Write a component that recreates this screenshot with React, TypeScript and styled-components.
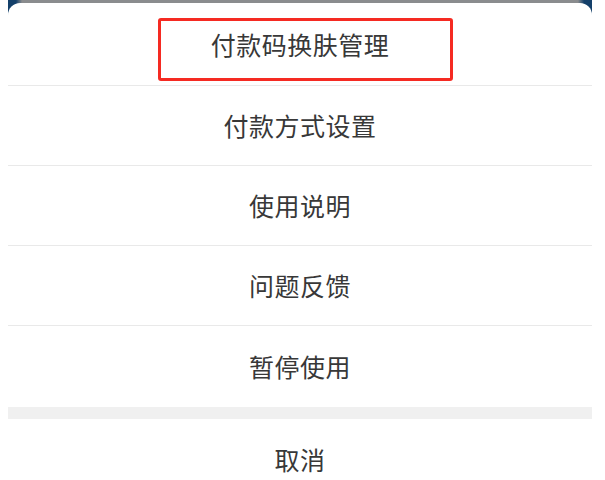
import styled, { createGlobalStyle } from "styled-components";

const GlobalStyle = createGlobalStyle`
  html, body {
    margin: 0;
    padding: 0;
    background: #ffffff;
  }
  body {
    font-family: "Noto Sans CJK SC", "Noto Sans", sans-serif;
  }
`;

const items = ["付款码换肤管理", "付款方式设置", "使用说明", "问题反馈", "暂停使用"];

export default function App() {
  return (
    <>
      <GlobalStyle />
      <Page>
        <Backdrop>
          <Sheet>
            {items.map((label, index) => (
              <Row key={label} $first={index === 0} $last={index === items.length - 1}>
                <Label>{label}</Label>
                {index === 0 && <Highlight />}
              </Row>
            ))}
            <Gap />
            <CancelRow>
              <Label>取消</Label>
            </CancelRow>
          </Sheet>
        </Backdrop>
      </Page>
    </>
  );
}

const Page = styled.div`
  width: 605px;
  height: 480px;
  overflow: hidden;
  padding: 0 13px 0 8px;
  box-sizing: border-box;
`;

const Backdrop = styled.div`
  background: linear-gradient(
    to right,
    #14406a 0,
    #14406a 8px,
    #8a8c8e 14px,
    #8a8c8e calc(100% - 14px),
    #14406a calc(100% - 8px),
    #14406a 100%
  );
  padding-top: 3px;
`;

const Sheet = styled.div`
  background: #ffffff;
  border-radius: 12px 12px 0 0;
  display: flex;
  flex-direction: column;
`;

const Row = styled.div<{ $first?: boolean; $last?: boolean }>`
  position: relative;
  box-sizing: border-box;
  height: ${(p) => (p.$first ? "83px" : p.$last ? "81px" : "80px")};
  display: flex;
  align-items: center;
  justify-content: center;
  border-bottom: ${(p) => (p.$last ? "none" : "1px solid #e9e9e9")};
`;

const CancelRow = styled.div`
  height: 80px;
  display: flex;
  align-items: center;
  justify-content: center;
`;

const Gap = styled.div`
  height: 12px;
  background: #f0f0f0;
`;

const Label = styled.span`
  font-size: 25px;
  color: #383838;
  letter-spacing: 0.5px;
  line-height: 1;
`;

const Highlight = styled.div`
  position: absolute;
  left: 150px;
  top: 15px;
  width: 295px;
  height: 63px;
  box-sizing: border-box;
  border: 3px solid #f52a22;
  border-radius: 3px;
`;
